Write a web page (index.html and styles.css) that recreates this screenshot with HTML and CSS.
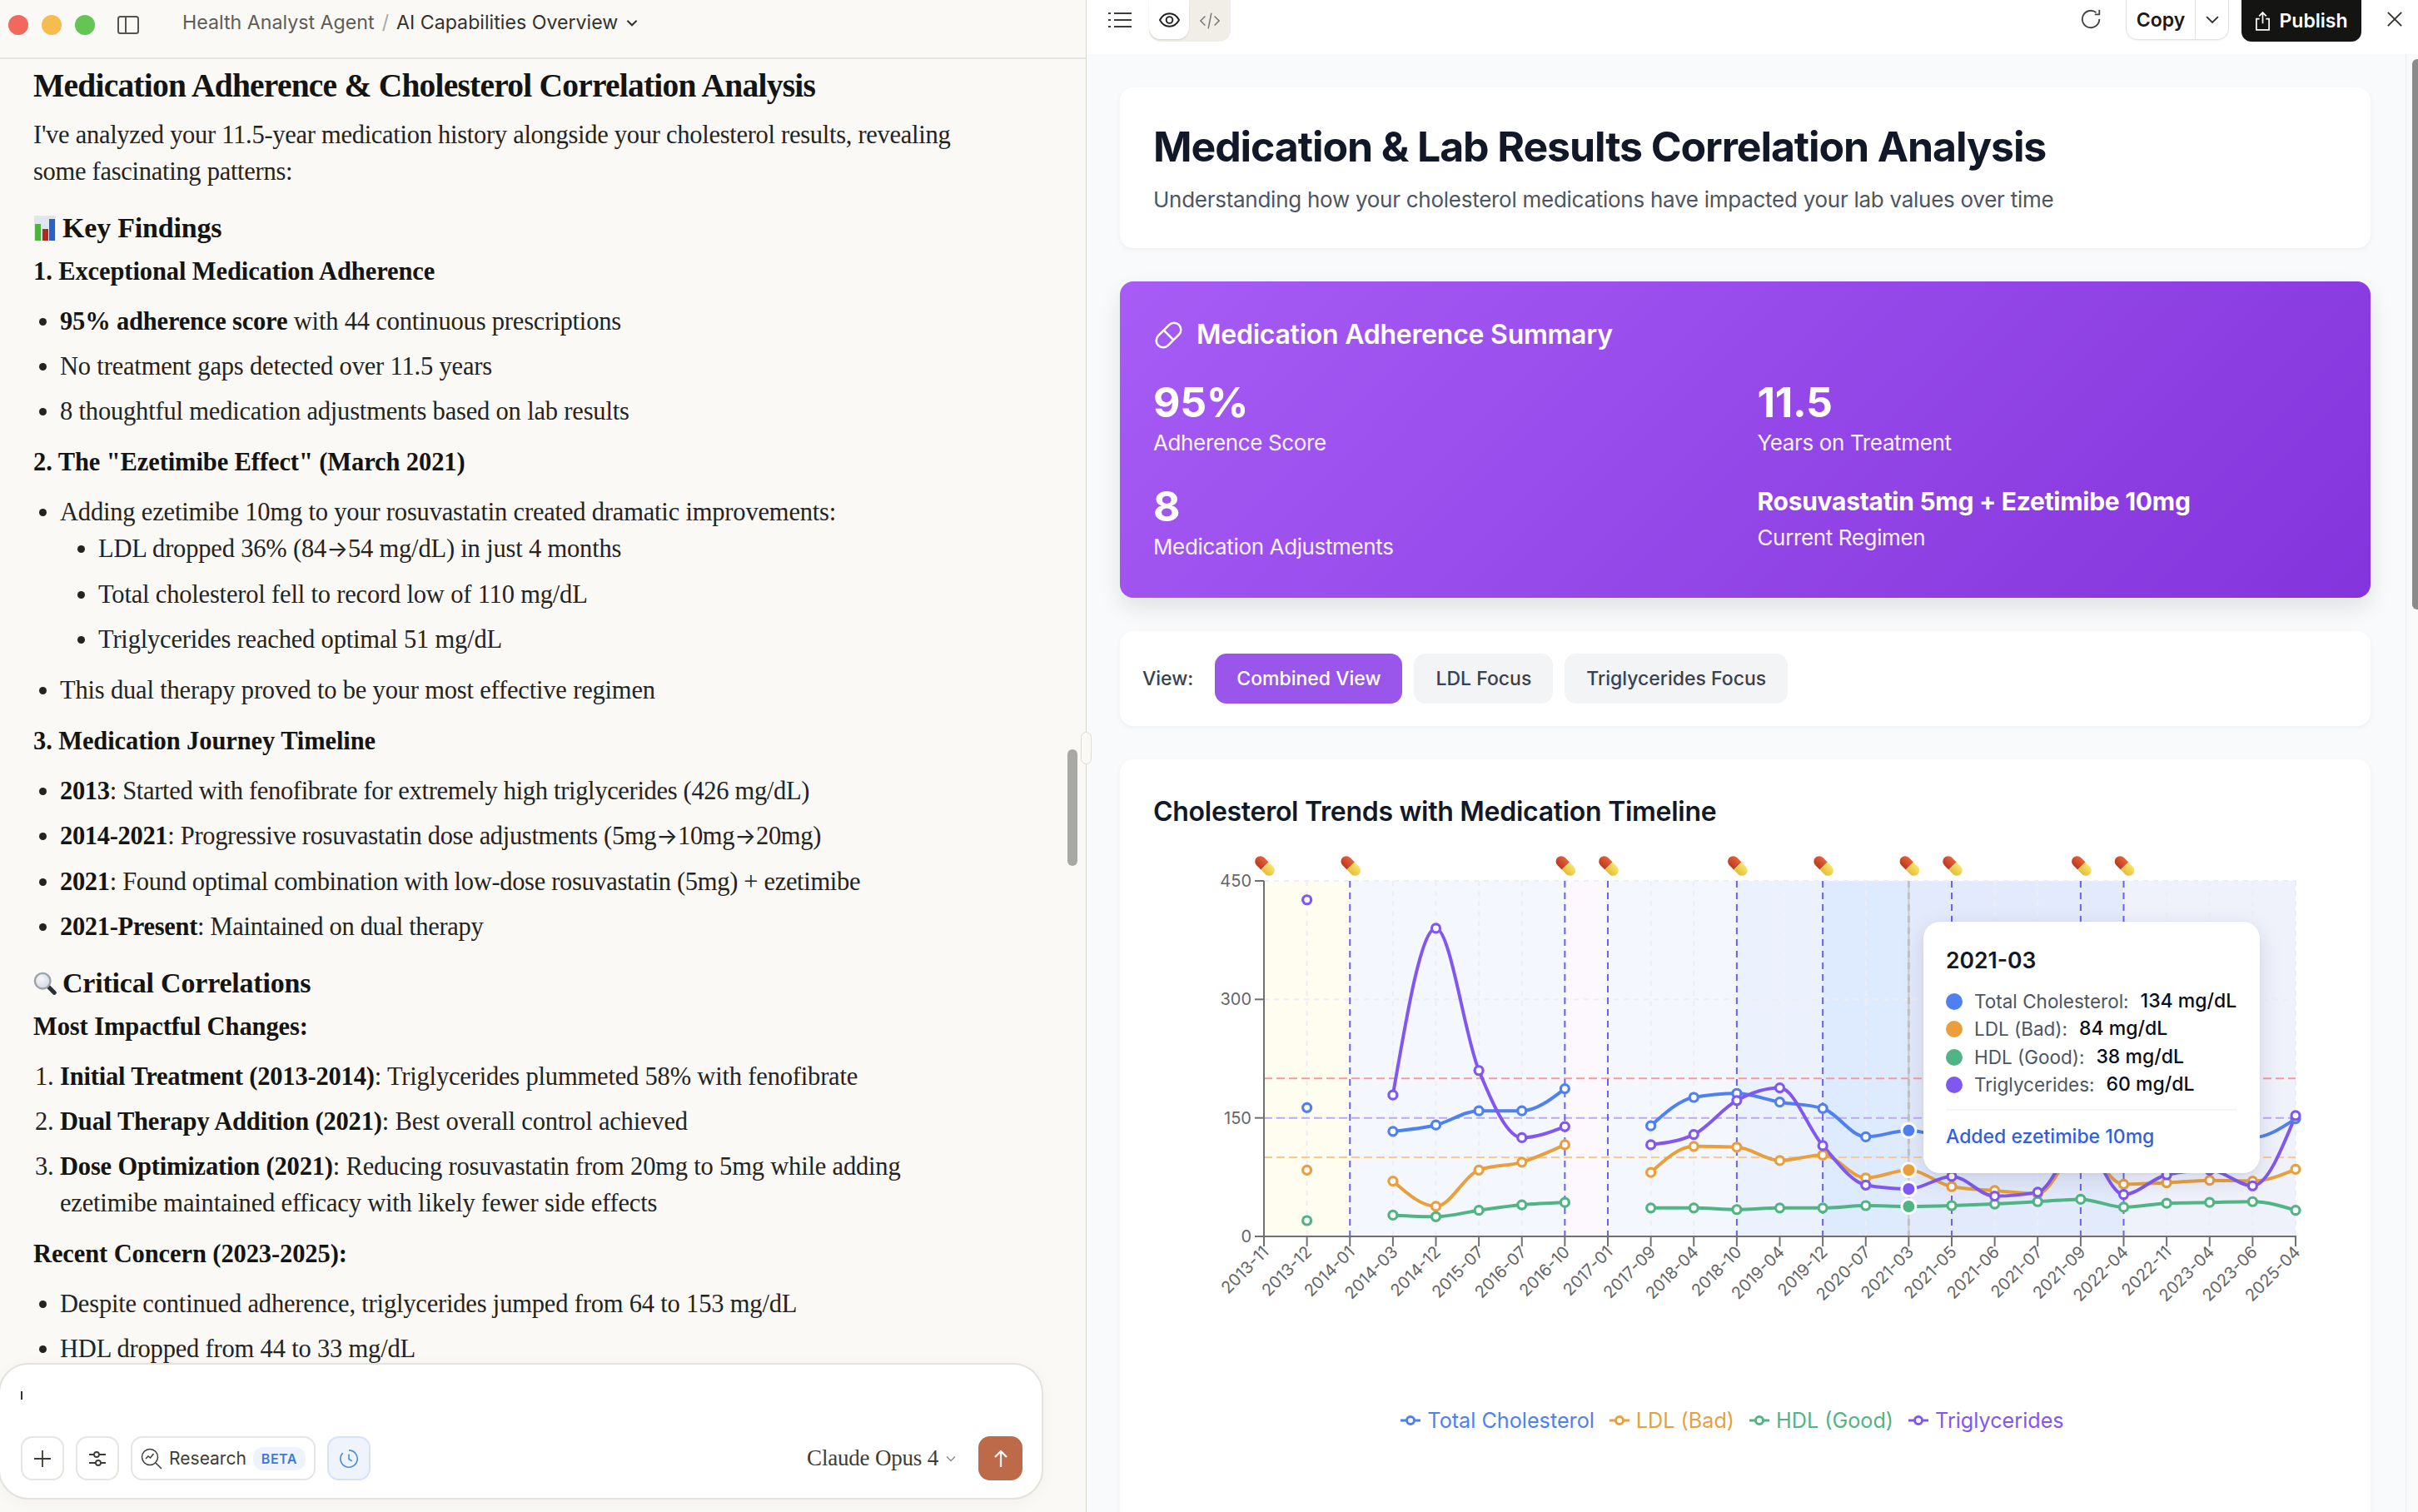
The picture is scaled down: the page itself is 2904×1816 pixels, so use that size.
FILE: index.html
```
<!DOCTYPE html>
<html lang="en">
<head>
<meta charset="utf-8">
<title>Medication &amp; Lab Results Correlation Analysis</title>
<link rel="stylesheet" href="styles.css">
</head>
<body>
<div class="app">
  <section class="chat">
    <header class="chat-head">
      <div class="lights"><i class="light red"></i><i class="light yellow"></i><i class="light green"></i></div>
      <svg class="side-icon" viewBox="0 0 26 22"><rect x="1" y="1" width="24" height="20" rx="2.5"/><path d="M10 1v20"/></svg>
      <nav class="crumbs"><span class="crumb-a">Health Analyst Agent</span><span class="crumb-sep">/</span><span class="crumb-b">AI Capabilities Overview</span>
        <svg class="chev" viewBox="0 0 12 8"><path d="M1 1.5l5 5 5-5"/></svg></nav>
    </header>
    <article class="prose">
      <h1>Medication Adherence &amp; Cholesterol Correlation Analysis</h1>
      <p>I've analyzed your 11.5-year medication history alongside your cholesterol results, revealing some fascinating patterns:</p>
      <h2><svg class="emoji" viewBox="0 0 26 30"><rect width="26" height="30" fill="#dfe6ee"/><rect x="1" y="10" width="7" height="20" fill="#4cb53d"/><rect x="10" y="16" width="7" height="14" fill="#b8261f"/><rect x="18" y="4" width="7" height="26" fill="#2a5fc4"/></svg> Key Findings</h2>
      <h3>1. Exceptional Medication Adherence</h3>
      <ul>
        <li><b>95% adherence score</b> with 44 continuous prescriptions</li>
        <li>No treatment gaps detected over 11.5 years</li>
        <li>8 thoughtful medication adjustments based on lab results</li>
      </ul>
      <h3>2. The "Ezetimibe Effect" (March 2021)</h3>
      <ul>
        <li>Adding ezetimibe 10mg to your rosuvastatin created dramatic improvements:
          <ul class="sub">
            <li>LDL dropped 36% (84<span class="arw">→</span>54 mg/dL) in just 4 months</li>
            <li>Total cholesterol fell to record low of 110 mg/dL</li>
            <li>Triglycerides reached optimal 51 mg/dL</li>
          </ul>
        </li>
        <li>This dual therapy proved to be your most effective regimen</li>
      </ul>
      <h3>3. Medication Journey Timeline</h3>
      <ul class="timeline">
        <li><b>2013</b>: Started with fenofibrate for extremely high triglycerides (426 mg/dL)</li>
        <li><b>2014-2021</b>: Progressive rosuvastatin dose adjustments (5mg<span class="arw">→</span>10mg<span class="arw">→</span>20mg)</li>
        <li><b>2021</b>: Found optimal combination with low-dose rosuvastatin (5mg) + ezetimibe</li>
        <li><b>2021-Present</b>: Maintained on dual therapy</li>
      </ul>
      <h2 class="h2-wide"><svg class="emoji" viewBox="0 0 30 30"><defs><radialGradient id="glass" cx=".4" cy=".35" r=".7"><stop offset="0" stop-color="#f6f8fa"/><stop offset="1" stop-color="#cfd6dc"/></radialGradient></defs><path d="M18 18l9 9" stroke="#2c3036" stroke-width="5.5" stroke-linecap="round"/><circle cx="12" cy="12" r="10" fill="url(#glass)" stroke="#9aa3ab" stroke-width="2.5"/></svg> Critical Correlations</h2>
      <h3>Most Impactful Changes:</h3>
      <ol>
        <li><b>Initial Treatment (2013-2014)</b>: Triglycerides plummeted 58% with fenofibrate</li>
        <li><b>Dual Therapy Addition (2021)</b>: Best overall control achieved</li>
        <li><b>Dose Optimization (2021)</b>: Reducing rosuvastatin from 20mg to 5mg while adding ezetimibe maintained efficacy with likely fewer side effects</li>
      </ol>
      <h3>Recent Concern (2023-2025):</h3>
      <ul>
        <li>Despite continued adherence, triglycerides jumped from 64 to 153 mg/dL</li>
        <li>HDL dropped from 44 to 33 mg/dL</li>
      </ul>
    </article>
    <div class="left-thumb"></div>
    <form class="composer">
      <div class="caret"></div>
      <div class="tools">
        <button type="button" class="tool"><svg class="ico" viewBox="0 0 24 24"><path d="M12 2v20M2 12h20"/></svg></button>
        <button type="button" class="tool"><svg class="ico" viewBox="0 0 24 24"><path d="M2 7h6M14 7h8M2 17h8M16 17h6"/><circle cx="11" cy="7" r="3"/><circle cx="13" cy="17" r="3"/></svg></button>
        <button type="button" class="tool tool-research"><svg class="ico" viewBox="0 0 26 26"><circle cx="11" cy="11" r="9.5"/><path d="M18 18l7 7M6 13l3-3 2.500 2 4-5"/></svg><span>Research</span><em class="beta">BETA</em></button>
        <button type="button" class="tool tool-clock"><svg class="ico" viewBox="0 0 26 26"><path d="M13 2a11 11 0 1 1-8 3.500M13 7v6.500l4 2.500M6 8h.01M9 4.500h.01"/></svg></button>
        <div class="model"><span>Claude Opus 4</span><svg class="chev-sm" viewBox="0 0 12 8"><path d="M1 1.500l5 5 5-5"/></svg></div>
        <button type="button" class="send"><svg class="ico" viewBox="0 0 24 24"><path d="M12 22V3M5 10l7-7 7 7"/></svg></button>
      </div>
    </form>
    <div class="handle"></div>
  </section>

  <section class="artifact">
    <header class="art-head">
      <svg class="list-icon" viewBox="0 0 28 20"><path d="M7 2h21M7 10h21M7 18h21M0 2h3M0 10h3M0 18h3"/></svg>
      <div class="toggle">
        <span class="toggle-on"><svg class="eye" viewBox="0 0 26 20"><path d="M1 10c3-5.500 7-8 12-8s9 2.500 12 8c-3 5.500-7 8-12 8s-9-2.500-12-8z"/><circle cx="13" cy="10" r="4"/></svg></span>
        <span class="toggle-off"><svg class="code" viewBox="0 0 28 24"><path d="M8 6l-6 6 6 6M20 6l6 6-6 6M16 2l-4 20"/></svg></span>
      </div>
      <div class="head-spacer"></div>
      <svg class="reload" viewBox="0 0 28 28"><path d="M24 14a11 11 0 1 1-4-8.500M24 2v6h-6"/></svg>
      <div class="copy"><span class="copy-text">Copy</span><span class="copy-more"><svg class="chev" viewBox="0 0 12 8"><path d="M1 1.500l5 5 5-5"/></svg></span></div>
      <button type="button" class="publish"><svg class="share" viewBox="0 0 20 26"><path d="M6 10H2v14h16V10h-4M10 16V2M5.500 6.500L10 2l4.500 4.500"/></svg>Publish</button>
      <svg class="close" viewBox="0 0 22 22"><path d="M2 2l18 18M20 2L2 20"/></svg>
    </header>
    <div class="art-body">
      <main class="art-scroll">
        <section class="card title-card">
          <h1>Medication &amp; Lab Results Correlation Analysis</h1>
          <p>Understanding how your cholesterol medications have impacted your lab values over time</p>
        </section>
        <section class="summary">
          <h2><svg class="pill-icon" viewBox="0 0 38 38"><g transform="rotate(-45 19 19)"><rect x="1" y="10.500" width="36" height="17" rx="8.500"/><path d="M19 10.500v17"/></g></svg>Medication Adherence Summary</h2>
          <div class="stats">
            <div><div class="stat-value">95%</div><div class="stat-label">Adherence Score</div></div>
            <div><div class="stat-value">11.5</div><div class="stat-label">Years on Treatment</div></div>
            <div><div class="stat-value">8</div><div class="stat-label">Medication Adjustments</div></div>
            <div><div class="stat-value stat-small">Rosuvastatin 5mg + Ezetimibe 10mg</div><div class="stat-label stat-label-small">Current Regimen</div></div>
          </div>
        </section>
        <section class="card controls">
          <span class="view-label">View:</span>
          <button type="button" class="view-btn view-active">Combined View</button>
          <button type="button" class="view-btn">LDL Focus</button>
          <button type="button" class="view-btn">Triglycerides Focus</button>
        </section>
        <section class="card chart-card">
          <h2>Cholesterol Trends with Medication Timeline</h2>
          <div class="chart-wrap">
            <svg id="chart" class="chart" viewBox="0 0 1420 660"></svg>
            <div class="tooltip">
              <div class="tip-date">2021-03</div>
              <div class="tip-row"><i class="tip-dot c-tc"></i><span>Total Cholesterol:</span><b>134 mg/dL</b></div>
              <div class="tip-row"><i class="tip-dot c-ldl"></i><span>LDL (Bad):</span><b>84 mg/dL</b></div>
              <div class="tip-row"><i class="tip-dot c-hdl"></i><span>HDL (Good):</span><b>38 mg/dL</b></div>
              <div class="tip-row"><i class="tip-dot c-tg"></i><span>Triglycerides:</span><b>60 mg/dL</b></div>
              <div class="tip-note">Added ezetimibe 10mg</div>
            </div>
          </div>
          <div class="legend">
            <span class="leg t-tc"><svg viewBox="0 0 24 12"><path d="M0 6h7M17 6h7"/><circle cx="12" cy="6" r="4.500"/></svg>Total Cholesterol</span>
            <span class="leg t-ldl"><svg viewBox="0 0 24 12"><path d="M0 6h7M17 6h7"/><circle cx="12" cy="6" r="4.500"/></svg>LDL (Bad)</span>
            <span class="leg t-hdl"><svg viewBox="0 0 24 12"><path d="M0 6h7M17 6h7"/><circle cx="12" cy="6" r="4.500"/></svg>HDL (Good)</span>
            <span class="leg t-tg"><svg viewBox="0 0 24 12"><path d="M0 6h7M17 6h7"/><circle cx="12" cy="6" r="4.500"/></svg>Triglycerides</span>
          </div>
        </section>
      </main>
      <div class="right-track"><div class="right-thumb"></div></div>
    </div>
  </section>
</div>
<script src="chart.js"></script>
</body>
</html>
```
FILE: styles.css
```
* { box-sizing: border-box; }
html, body { margin: 0; height: 100%; overflow: hidden; }
body { background: #faf9f5; font-family: Inter, "Liberation Sans", sans-serif; color: #111827; }
button { font: inherit; }
svg { display: block; fill: none; stroke: currentColor; }
.app { display: flex; width: 2904px; height: 1816px; }

/* chat pane */
.chat { position: relative; flex: none; background: #faf9f5; overflow: visible; z-index: 2; border-right: 1px solid #d8d6d1; width: 1305px; }
.chat-head { height: 71px; display: flex; align-items: flex-start; border-bottom: 2px solid #e6e5e0; position: relative; }
.lights { display: flex; gap: 16px; padding: 18px 0 0 10px; }
.light { width: 24px; height: 24px; border-radius: 50%; display: block; }
.red { background: #f0685e; }
.yellow { background: #f5bd4f; }
.green { background: #62c554; }
.side-icon { width: 26px; height: 22px; margin: 19px 0 0 27px; stroke: #55544f; stroke-width: 2; }
.crumbs { display: flex; align-items: center; margin: 10px 0 0 52px; height: 34px; font-size: 23.200px; }
.crumb-a { color: #5d5c57; }
.crumb-sep { color: #a9a8a2; margin: 0 9px; }
.crumb-b { color: #33322e; }
.chev { width: 14px; height: 9px; margin-left: 10px; stroke: #33322e; stroke-width: 1.800; }

.prose { padding: 8px 0 0 40px; height: 1745px; width: 1290px; overflow: hidden; font-family: "Liberation Serif", serif; font-size: 30.500px; letter-spacing: -.18px; line-height: 44px; color: #24231f; }
.prose h1 { margin: 0; font-size: 39.500px; letter-spacing: -.78px; line-height: 48px; color: #141413; font-weight: 700; }
.prose p { margin: 13px 0 0; width: 1120px; letter-spacing: -.28px; }
.prose h2 { margin: 24px 0 10px; font-size: 34px; letter-spacing: -.2px; line-height: 44px; color: #141413; font-weight: 700; display: flex; align-items: center; gap: 7px; }
.prose h2.h2-wide { margin-top: 24px; }
.prose h3 { margin: 19px 0 18px; font-size: 30.500px; letter-spacing: -.1px; line-height: 40px; color: #141413; font-weight: 700; }
.prose h2 + h3 { margin-top: 10px; }
.prose ul, .prose ol { margin: 0; padding: 0 0 0 32px; width: 1060px; }
.prose li + li { margin-top: 10px; }
.prose li b { color: #141413; }
.prose ul.sub { margin: 0 0 17px; padding-left: 46px; width: auto; list-style: disc; }
.prose ul.timeline { letter-spacing: -.32px; }
.arw { font-family: Inter, sans-serif; font-size: 27px; letter-spacing: 0; }
.emoji { width: 28px; height: 30px; flex: none; stroke: none; }

.left-thumb { position: absolute; left: 1282px; top: 900px; width: 12px; height: 140px; border-radius: 6px; background: #a8a8a5; }
.handle { position: absolute; left: 1298px; top: 879px; width: 13px; height: 39px; border-radius: 7px; background: #faf9f5; border: 1px solid #dddcd7; z-index: 3; }
.composer { position: absolute; left: -2px; top: 1637px; width: 1255px; height: 164px; background: #fff; border: 2px solid #e3e2dd; border-radius: 36px; box-shadow: 0 4px 20px rgba(0,0,0,.035); display: flex; flex-direction: column; justify-content: space-between; padding: 26px 23px 21px 25px; }
.caret { width: 2px; height: 10px; margin-top: 6px; background: #33322e; }
.tools { display: flex; align-items: stretch; gap: 14px; height: 53px; }
.tool { height: 53px; width: 52px; padding: 0; display: flex; align-items: center; justify-content: center; background: #fff; border: 2px solid #e6e5e0; border-radius: 14px; color: #3d3d38; }
.ico { width: 24px; height: 24px; stroke-width: 1.800; }
.tool-research { width: 222px; gap: 8px; font-size: 21px; }
.tool-research .ico { width: 26px; height: 26px; stroke-width: 1.500; }
.beta { font-style: normal; font-size: 16px; font-weight: 600; color: #3d7ad8; background: #eff4fc; border-radius: 12px; padding: 4px 10px; letter-spacing: .5px; }
.tool-clock { background: #eff4fc; border-color: #d6e2f5; color: #4f8ddc; }
.model { margin-left: auto; margin-right: 13px; display: flex; align-items: center; gap: 9px; font-family: "Liberation Serif", serif; font-size: 27px; letter-spacing: -.2px; color: #3d3d38; }
.chev-sm { width: 12px; height: 8px; stroke: #8c8b85; stroke-width: 1.500; }
.send { width: 53px; height: 53px; padding: 0; border: 0; border-radius: 14px; background: #bd6a4a; color: #fff; display: flex; align-items: center; justify-content: center; }
.send .ico { stroke-width: 2.200; }

/* artifact pane */
.artifact { flex: 1; min-width: 0; display: flex; flex-direction: column; background: #f9fafb; }
.art-head { height: 65px; flex: none; background: #fff; display: flex; align-items: flex-start; }
.list-icon { width: 28px; height: 20px; margin: 14px 0 0 26px; stroke: #3d3d38; stroke-width: 2; }
.toggle { display: flex; margin-left: 21px; width: 98px; height: 50px; background: #f0eee6; border-radius: 0 0 14px 14px; }
.toggle-on { width: 48px; height: 47px; background: #fff; border-radius: 0 0 14px 14px; display: flex; align-items: center; justify-content: center; box-shadow: 0 1px 2px rgba(0,0,0,.12); }
.toggle-off { flex: 1; display: flex; align-items: center; justify-content: center; }
.eye { width: 25px; height: 20px; stroke: #222; stroke-width: 2; }
.code { width: 26px; height: 24px; stroke: #77756f; stroke-width: 1.600; }
.head-spacer { flex: 1; }
.reload { width: 26px; height: 26px; margin: 10px 28px 0 0; stroke: #44433f; stroke-width: 2; }
.copy { width: 124px; height: 48px; display: flex; border: 1px solid #e3e2dd; border-top: 0; border-radius: 0 0 14px 14px; font-size: 23px; font-weight: 600; color: #1a1a18; box-shadow: 0 1px 2px rgba(0,0,0,.05); }
.copy-text { width: 83px; display: flex; align-items: center; justify-content: center; border-right: 1px solid #e3e2dd; }
.copy-more { flex: 1; display: flex; align-items: center; justify-content: center; }
.copy-more .chev { margin: 0; width: 18px; height: 11px; stroke-width: 1.400; }
.publish { margin-left: 15px; width: 144px; height: 50px; padding: 0; border: 0; border-radius: 0 0 12px 12px; background: #141413; color: #fff; font-size: 23px; font-weight: 600; display: flex; align-items: center; justify-content: center; gap: 10px; }
.share { width: 19px; height: 25px; stroke: #fff; stroke-width: 1.800; }
.close { width: 20px; height: 20px; margin: 13px 18px 0 30px; stroke: #33322e; stroke-width: 2; }

.art-body { flex: 1; min-height: 0; display: flex; }
.art-scroll { flex: 1; min-width: 0; overflow: hidden; padding: 40px 42px 0 40px; display: flex; flex-direction: column; gap: 40px; }
.card { background: #fff; border-radius: 16px; box-shadow: 0 2px 6px rgba(0,0,0,.05); flex: none; }
.right-track { width: 15px; flex: none; background: #fafafa; border-left: 1px solid #ececea; position: relative; }
.right-thumb { position: absolute; left: 7px; top: 6px; width: 12px; height: 661px; border-radius: 6px; background: #8b8b8b; }

.title-card { height: 193px; padding: 41px 41px 41px 40px; }
.title-card h1 { margin: 0; font-size: 50px; line-height: 60px; font-weight: 700; letter-spacing: -1.1px; color: #111827; }
.title-card p { margin: 16px 0 0; font-size: 26px; letter-spacing: -.27px; line-height: 36px; color: #4b5563; }

.summary { flex: none; height: 380px; padding: 42px 41px 41px 40px; border-radius: 16px; color: #fff; background: linear-gradient(135deg, #a65cf5, #8434dc); box-shadow: 0 12px 28px rgba(0,0,0,.1); }
.summary h2 { margin: 0; display: flex; align-items: center; gap: 15px; font-size: 32px; letter-spacing: -.25px; line-height: 44px; font-weight: 600; }
.pill-icon { width: 37px; height: 37px; stroke: #fff; stroke-width: 2.600; }
.stats { display: grid; grid-template-columns: 1fr 1fr; column-gap: 30px; row-gap: 28px; margin-top: 29px; }
.stat-value { font-size: 50px; letter-spacing: -.3px; line-height: 60px; font-weight: 700; }
.stat-small { font-size: 30px; letter-spacing: -.28px; line-height: 48px; }
.stat-label { font-size: 26px; letter-spacing: -.37px; line-height: 36px; margin-top: 1px; opacity: .92; }
.stat-label-small { margin-top: 2px; }

.controls { height: 114px; display: flex; align-items: center; gap: 14px; padding: 0 27px; }
.view-label { font-size: 23px; font-weight: 500; color: #374151; margin-right: 12px; }
.view-btn { height: 60px; padding: 0 26px; border: 0; border-radius: 14px; background: #f3f4f6; color: #374151; font-size: 23px; font-weight: 500; }
.view-active { background: #9a55ea; color: #fff; }

.chart-card { padding: 41px 41px 0 40px; height: 1000px; }
.chart-card h2 { margin: 0; font-size: 32px; letter-spacing: -.28px; line-height: 44px; font-weight: 600; color: #111827; }
.chart-wrap { position: relative; margin: 23px 0 0 1px; height: 660px; }
.chart { width: 1420px; height: 660px; stroke: none; overflow: visible; }
.tooltip { position: absolute; left: 924px; top: 87px; width: 404px; height: 302px; background: #fff; border-radius: 20px; padding: 27px; box-shadow: 0 8px 28px rgba(30,40,90,.13), 0 1px 3px rgba(0,0,0,.06); }
.tip-date { font-size: 26.500px; line-height: 38px; font-weight: 600; color: #111827; margin-bottom: 14px; }
.tip-row { display: flex; align-items: center; font-size: 22.500px; line-height: 33.400px; color: #4b5563; white-space: nowrap; }
.tip-row b { font-size: 23px; font-weight: 500; color: #0b0f19; margin-left: 14px; }
.tip-dot { width: 20px; height: 20px; border-radius: 50%; margin-right: 14px; flex: none; }
.c-tc { background: #4f80ef; }
.c-ldl { background: #e89f3c; }
.c-hdl { background: #50b484; }
.c-tg { background: #8058ef; }
.tip-note { margin-top: 12px; padding-top: 13px; border-top: 2px solid #f3f4f6; font-size: 23px; line-height: 36px; font-weight: 500; color: #2f60e0; }

.legend { display: flex; justify-content: center; gap: 18px; margin-top: 8px; font-size: 25.200px; line-height: 36px; padding-right: 30px; }
.leg { display: flex; align-items: center; gap: 8px; }
.leg svg { width: 24px; height: 12px; stroke-width: 3; }
.t-tc { color: #4f80ef; }
.t-ldl { color: #e89f3c; }
.t-hdl { color: #50b484; }
.t-tg { color: #8058ef; }
```
FILE: chart.js
```
(function () {
  var NS = 'http://www.w3.org/2000/svg';
  var svg = document.getElementById('chart');
  var L = 132, R = 1371, T = 38, B = 465, MAX = 450;
  var cats = ['2013-11','2013-12','2014-01','2014-03','2014-12','2015-07','2016-07','2016-10','2017-01','2017-09','2018-04','2018-10','2019-04','2019-12','2020-07','2021-03','2021-05','2021-06','2021-07','2021-09','2022-04','2022-11','2023-04','2023-06','2025-04'];
  var n = null;
  var series = [
    { c: '#4f80ef', v: [n,163,n,133,141,159,159,187,n,140,176,181,170,162,126,134,125,130,125,130,128,125,126,125,149] },
    { c: '#e89f3c', v: [n,84,n,70,38,84,94,116,n,81,114,113,96,103,74,84,63,58,54,111,66,68,71,70,85] },
    { c: '#50b484', v: [n,20,n,27,25,33,40,43,n,36,36,34,36,36,39,38,39,41,44,47,37,42,43,44,33] },
    { c: '#8058ef', v: [n,426,n,179,390,210,125,139,n,116,129,172,188,115,65,60,76,51,56,119,53,78,84,64,153] }
  ];
  var bands = [[0,2,'#fffcf0'],[2,7,'#f4f7fe'],[7,8,'#fcf8fd'],[8,11,'#f4f7fe'],[11,13,'#ecf2fd'],[13,15,'#deeafd'],[15,20,'#e3eafb'],[20,24,'#eff1fb']];
  var marks = [0,2,7,8,11,13,15,16,19,20];
  function X(i) { return L + (R - L) * i / 24; }
  function Y(v) { return B - (B - T) * v / MAX; }
  function el(name, attrs, parent) {
    var e = document.createElementNS(NS, name);
    for (var k in attrs) e.setAttribute(k, attrs[k]);
    (parent || svg).appendChild(e);
    return e;
  }
  function line(x1, y1, x2, y2, color, w, dash) {
    var a = { x1: x1, y1: y1, x2: x2, y2: y2, stroke: color, 'stroke-width': w };
    if (dash) a['stroke-dasharray'] = dash;
    return el('line', a);
  }
  bands.forEach(function (b) {
    el('rect', { x: X(b[0]), y: T, width: X(b[1]) - X(b[0]), height: B - T, fill: b[2] });
  });
  [150, 300, 450].forEach(function (v) { line(L, Y(v), R, Y(v), '#eceef3', 2, '6 6'); });
  cats.forEach(function (c, i) { if (i) line(X(i), T, X(i), B, '#eceef3', 2, '6 6'); });
  [[200,'#f59a9a'],[150,'#bda8f4'],[100,'#f8c98c']].forEach(function (h) { line(L, Y(h[0]), R, Y(h[0]), h[1], 2, '10 5'); });
  marks.forEach(function (i) { line(X(i), T, X(i), B, '#6a62f0', 2, '8 6'); });
  line(X(15), T, X(15), B, '#c9c9c9', 2);

  // axes
  line(L, T, L, B + 1, '#707070', 2);
  line(L - 1, B, R + 1, B, '#707070', 2);
  [0, 150, 300, 450].forEach(function (v) {
    line(L - 11, Y(v), L, Y(v), '#707070', 2);
    var t = el('text', { x: L - 15, y: Y(v) + 7, 'text-anchor': 'end', fill: '#666', 'font-size': 20 });
    t.textContent = v;
  });
  cats.forEach(function (c, i) {
    line(X(i), B, X(i), B + 12, '#707070', 2);
    var x = X(i) + 7, y = B + 20;
    var t = el('text', { x: x, y: y, 'text-anchor': 'end', fill: '#666', 'font-size': 20, transform: 'rotate(-45 ' + x + ' ' + y + ')' });
    t.textContent = c;
  });

  // monotone-x curves
  function sign(x) { return x < 0 ? -1 : 1; }
  function curve(p) {
    var m = p.length, t = [], i;
    if (m < 2) return '';
    var s = [];
    for (i = 0; i < m - 1; i++) s[i] = (p[i + 1][1] - p[i][1]) / (p[i + 1][0] - p[i][0]);
    for (i = 1; i < m - 1; i++) {
      var h0 = p[i][0] - p[i - 1][0], h1 = p[i + 1][0] - p[i][0];
      var q = (s[i - 1] * h1 + s[i] * h0) / (h0 + h1);
      t[i] = (sign(s[i - 1]) + sign(s[i])) * Math.min(Math.abs(s[i - 1]), Math.abs(s[i]), 0.5 * Math.abs(q)) || 0;
    }
    t[0] = m > 2 ? (3 * s[0] - t[1]) / 2 : s[0];
    t[m - 1] = m > 2 ? (3 * s[m - 2] - t[m - 2]) / 2 : s[m - 2];
    var d = 'M' + p[0][0] + ',' + p[0][1];
    for (i = 0; i < m - 1; i++) {
      var dx = (p[i + 1][0] - p[i][0]) / 3;
      d += 'C' + (p[i][0] + dx) + ',' + (p[i][1] + dx * t[i]) + ' ' + (p[i + 1][0] - dx) + ',' + (p[i + 1][1] - dx * t[i + 1]) + ' ' + p[i + 1][0] + ',' + p[i + 1][1];
    }
    return d;
  }
  series.forEach(function (s) {
    var seg = [];
    function flush() {
      if (seg.length > 1) el('path', { d: curve(seg), fill: 'none', stroke: s.c, 'stroke-width': 4 });
      seg = [];
    }
    s.v.forEach(function (v, i) {
      if (v === null) flush(); else seg.push([X(i), Y(v)]);
    });
    flush();
  });
  series.forEach(function (s) {
    s.v.forEach(function (v, i) {
      if (v === null) return;
      if (i === 15) el('circle', { cx: X(i), cy: Y(v), r: 8.5, fill: s.c, stroke: '#fff', 'stroke-width': 3 });
      else el('circle', { cx: X(i), cy: Y(v), r: 5, fill: '#fff', stroke: s.c, 'stroke-width': 3.2 });
    });
  });

  // medication markers
  var defs = el('defs', {});
  var grad = el('linearGradient', { id: 'capsule', x1: 0, y1: 0, x2: 0, y2: 1 }, defs);
  el('stop', { offset: 0, 'stop-color': '#f7e56c' }, grad);
  el('stop', { offset: 1, 'stop-color': '#e4bd38' }, grad);
  var grad2 = el('linearGradient', { id: 'capsule-red', x1: 0, y1: 0, x2: 0, y2: 1 }, defs);
  el('stop', { offset: 0, 'stop-color': '#e8613a' }, grad2);
  el('stop', { offset: 1, 'stop-color': '#b93a20' }, grad2);
  marks.forEach(function (i) {
    var g = el('g', { transform: 'translate(' + (X(i) + 1) + ' 20) rotate(45)' });
    el('path', { d: 'M0,-6.500H-7.500A6.500,6.500 0 0 0 -7.500,6.500H0Z', fill: 'url(#capsule-red)' }, g);
    el('path', { d: 'M0,-6.500H7.500A6.500,6.500 0 0 1 7.500,6.500H0Z', fill: 'url(#capsule)' }, g);
  });
})();
```
